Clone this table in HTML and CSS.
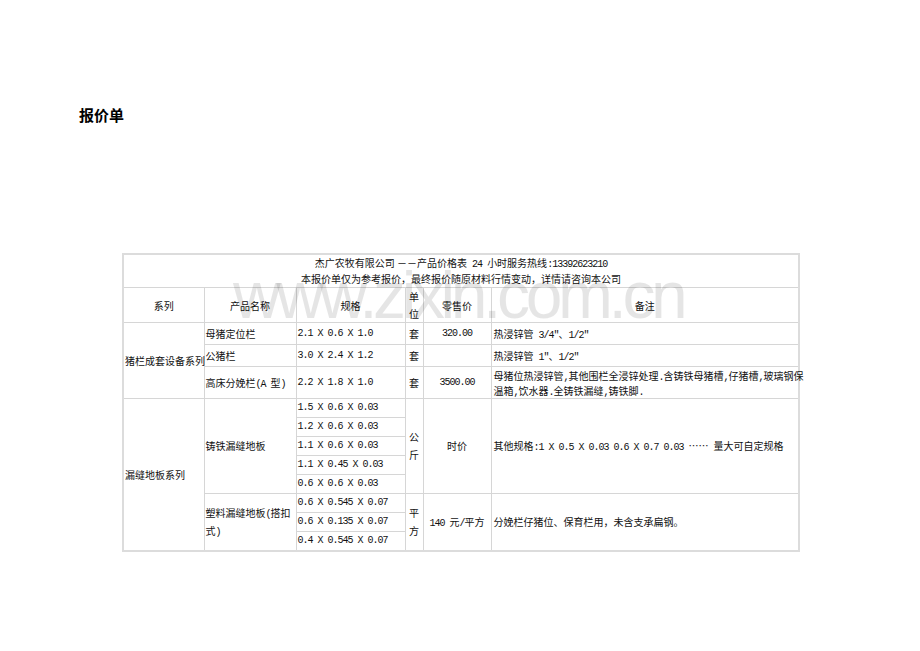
FILE: index.html
```html
<!DOCTYPE html>
<html lang="zh-CN">
<head>
<meta charset="utf-8">
<title>报价单</title>
<link rel="stylesheet" href="styles.css">
</head>
<body>
<div class="page">
  <h1 class="doc-title">报价单</h1>
  <div class="sheet">
    <table class="price">
      <colgroup>
        <col class="c-series">
        <col class="c-name">
        <col class="c-spec">
        <col class="c-unit">
        <col class="c-price">
        <col class="c-note">
      </colgroup>
      <tr class="r-title">
        <td colspan="6" class="center">杰广农牧有限公司 －－产品价格表<span class="n"> 24 </span>小时服务热线<span class="n">:13392623210</span><br>本报价单仅为参考报价，最终报价随原材料行情变动，详情请咨询本公司</td>
      </tr>
      <tr class="r-head">
        <td class="center">系列</td>
        <td class="center">产品名称</td>
        <td class="center">规格</td>
        <td class="center">单<br>位</td>
        <td class="center">零售价</td>
        <td class="center">备注</td>
      </tr>
      <tr class="r-a">
        <td rowspan="3" class="nowrap">猪栏成套设备系列</td>
        <td>母猪定位栏</td>
        <td class="num">2.1 X 0.6 X 1.0</td>
        <td class="center">套</td>
        <td class="center num">320.00</td>
        <td class="note">热浸锌管<span class="n"> 3/4″</span>、<span class="n">1/2″</span></td>
      </tr>
      <tr class="r-a">
        <td>公猪栏</td>
        <td class="num">3.0 X 2.4 X 1.2</td>
        <td class="center">套</td>
        <td></td>
        <td class="note">热浸锌管<span class="n"> 1″</span>、<span class="n">1/2″</span></td>
      </tr>
      <tr class="r-b">
        <td>高床分娩栏<span class="n">(A </span>型<span class="n">)</span></td>
        <td class="num">2.2 X 1.8 X 1.0</td>
        <td class="center">套</td>
        <td class="center num">3500.00</td>
        <td class="note nowrap">母猪位热浸锌管<span class="n">,</span>其他围栏全浸锌处理<span class="n">.</span>含铸铁母猪槽<span class="n">,</span>仔猪槽<span class="n">,</span>玻璃钢保<br>温箱<span class="n">,</span>饮水器<span class="n">.</span>全铸铁漏缝<span class="n">,</span>铸铁脚<span class="n">.</span></td>
      </tr>
      <tr class="r-s">
        <td rowspan="8" class="nowrap">漏缝地板系列</td>
        <td rowspan="5">铸铁漏缝地板</td>
        <td class="num">1.5 X 0.6 X 0.03</td>
        <td rowspan="5" class="center tall">公<br>斤</td>
        <td rowspan="5" class="center">时价</td>
        <td rowspan="5" class="note">其他规格<span class="n">:1 X 0.5 X 0.03 0.6 X 0.7 0.03 </span>……<span class="n"> </span>量大可自定规格</td>
      </tr>
      <tr class="r-s"><td class="num">1.2 X 0.6 X 0.03</td></tr>
      <tr class="r-s"><td class="num">1.1 X 0.6 X 0.03</td></tr>
      <tr class="r-s"><td class="num">1.1 X 0.45 X 0.03</td></tr>
      <tr class="r-t"><td class="num">0.6 X 0.6 X 0.03</td></tr>
      <tr class="r-s">
        <td rowspan="3" class="tall">塑料漏缝地板<span class="n">(</span>搭扣式<span class="n">)</span></td>
        <td class="num">0.6 X 0.545 X 0.07</td>
        <td rowspan="3" class="center tall">平<br>方</td>
        <td rowspan="3" class="center"><span class="n">140 </span>元<span class="n">/</span>平方</td>
        <td rowspan="3" class="note">分娩栏仔猪位、保育栏用，未含支承扁钢。</td>
      </tr>
      <tr class="r-t"><td class="num">0.6 X 0.135 X 0.07</td></tr>
      <tr class="r-s"><td class="num">0.4 X 0.545 X 0.07</td></tr>
    </table>
    <div class="watermark">www.zixin.com.cn</div>
  </div>
</div>
</body>
</html>
```

FILE: styles.css
```css
html, body {
  margin: 0;
  padding: 0;
  background: #ffffff;
}

body {
  font-family: "Noto Sans CJK SC", "Liberation Sans", sans-serif;
  color: #111111;
  width: 920px;
  height: 651px;
  overflow: hidden;
}

.page {
  padding: 106px 0 0 79px;
}

.doc-title {
  margin: 0;
  font-size: 15px;
  line-height: 18px;
  font-weight: bold;
  color: #000000;
}

.sheet {
  position: relative;
  margin: 129px 0 0 43px;
  width: 676px;
}

.price {
  border-collapse: collapse;
  table-layout: fixed;
  width: 676px;
  font-size: 10px;
  border: 2px solid #dcdcdc;
}

.c-series { width: 81px; }
.c-name { width: 92px; }
.c-spec { width: 109px; }
.c-unit { width: 18px; }
.c-price { width: 68px; }
.c-note { width: 308px; }

.price td {
  border: 1px solid #d6d6d6;
  padding: 0 1px;
  vertical-align: middle;
  text-align: left;
  line-height: 18px;
  white-space: normal;
}

.price td.center {
  text-align: center;
}

.price td.note {
  padding-left: 2px;
}

.price td.nowrap {
  white-space: nowrap;
  padding-right: 0;
}

.r-title td {
  height: 32px;
  line-height: 16px;
}

.r-head td {
  height: 34px;
  line-height: 17px;
}

.r-a td {
  height: 21px;
}

.r-b td {
  height: 31px;
  line-height: 15px;
}

.r-s td {
  height: 18px;
}

.r-t td {
  height: 17px;
}

.price td.tall {
  line-height: 18px;
}

.price td.num {
  font-family: "Liberation Mono", monospace;
  letter-spacing: -1px;
  white-space: nowrap;
}

.n {
  font-family: "Liberation Mono", monospace;
  letter-spacing: -1px;
  line-height: 10px;
}

.watermark {
  position: absolute;
  left: 111px;
  top: 9px;
  font-family: "Liberation Sans", sans-serif;
  font-size: 66px;
  line-height: 66px;
  letter-spacing: -4.4px;
  color: rgba(0, 0, 0, 0.1);
  white-space: nowrap;
  pointer-events: none;
}
```
